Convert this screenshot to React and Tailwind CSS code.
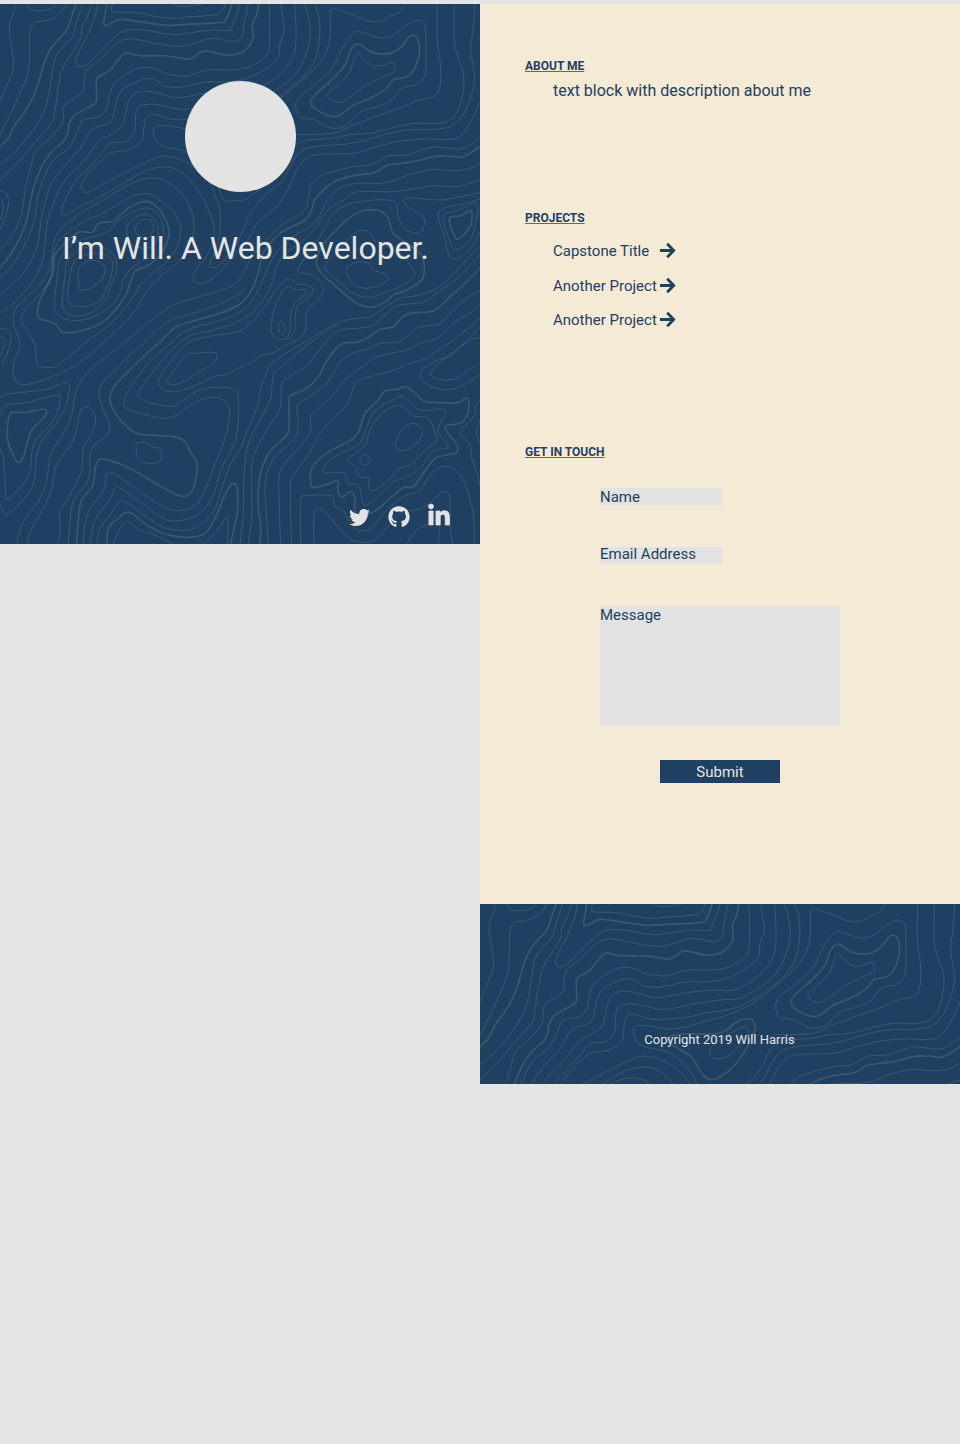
import React from "react";
import { FaTwitter, FaGithub, FaLinkedinIn } from "react-icons/fa";

// Contour lines as point lists. Prefix "b" = bold line, "z" = closed loop.
const TOP = [
  "46,12 40,40 30,65 28,95 34,140 40,180 38,215 25,245 0,303",
  "0,405 30,345 60,280 82,225 88,180 88,120 92,85 105,68 130,63 160,55 185,35 200,12",
  "82,12 84,22 95,30 115,32 140,30 158,24 168,12",
  "b 228,12 215,50 200,90 175,118 150,150 132,190 118,240 100,290 75,335 45,375 25,415 0,440",
  "248,12 230,65 217,110 190,140 165,175 155,230 145,290 125,350 85,410 40,460 0,495",
  "275,12 262,50 245,85 243,110 225,145 190,200 175,260 165,330 155,370 110,420 60,480 0,540",
  "292,12 285,50 265,100 240,150 227,180 228,195 240,200 262,192 300,155 340,115 375,92 430,90 500,102 540,103 600,94 640,90 690,91 697,75 715,30 718,12",
  "71,600 82,540 95,490 110,450 150,415 180,380 190,355 190,325 205,305 245,280 252,262 254,225 270,200 300,180 340,138 375,118 420,120 480,133 540,139 590,128 640,115 690,124 715,120 728,105 732,70 745,12",
  "b 92,600 105,550 130,490 160,450 190,425 203,400 208,370 225,345 260,325 285,310 290,295 289,240 300,228 330,210 360,173 380,159 420,167 500,168 560,177 580,172 610,153 640,157 680,165 720,160 750,135 760,108 757,75 770,45 776,12",
  "b 320,12 316,40 311,70 318,77 330,72 360,58 420,65 500,76 560,73 660,68 680,55 696,12",
  "338,12 334,30 345,36 410,38 470,50 520,55 560,51 640,45 665,35 676,12",
  "515,12 540,20 570,18 605,12",
  "112,600 118,570 140,515 165,475 205,445 230,400 245,365 270,355 300,350 320,325 328,290 340,255 375,225 410,207 440,202 475,210 500,222 560,228 600,215 640,209 700,210 750,200 790,175 808,140 807,12",
  "137,600 150,560 175,520 205,485 240,445 275,390 325,370 340,350 348,310 365,270 400,250 440,236 470,242 490,258 530,262 560,258 620,246 680,246 740,235 800,205 835,170 840,130 853,90 848,50 842,12",
  "165,600 180,565 205,530 250,485 295,425 330,405 365,380 375,350 385,305 405,280 435,273 475,280 520,292 560,290 620,278 700,270 760,270 820,240 865,195 885,150 888,90 884,12",
  "195,600 225,545 260,510 300,465 330,430 370,427 390,415 405,390 407,345 415,322 440,313 480,315 540,328 580,325 650,310 720,300 780,295 835,265 885,225 915,170 930,110 925,50 912,12",
  "945,12 958,60 958,120 945,180 915,225 870,265 800,310 740,330 680,338 620,352 560,357 510,357 480,347 455,342 440,350 432,380 427,420 410,437 380,452 335,458 300,485 265,520 246,548 245,565 258,577 275,572 345,532 420,495 470,472 500,469 545,480 590,508 630,552 650,600",
  "280,600 320,580 370,550 430,515 480,502 520,505 560,530 590,565 612,600",
  "310,600 375,560 430,537 465,535 500,545 535,570 560,600",
  "375,600 400,588 440,581 470,590 478,600",
  "1215,12 1200,35 1170,48 1145,62 1110,64 1060,45 1015,30 997,27 991,45 990,110 975,165 940,210 890,255 840,295 800,320 740,347 690,360 620,380 570,387 520,380 480,376 461,385 462,405 475,430 500,442 560,455 600,480 640,530 670,600",
  "bz 600,448 568,428 572,408 620,402 690,402 730,395 765,370 795,356 818,362 825,385 812,420 790,460 760,500 725,528 695,539 672,528 655,505 635,472",
  "z 690,460 697,437 750,400 790,382 806,388 800,410 775,440 745,468 710,477 695,472",
  "z 890,335 888,310 905,285 950,250 1000,200 1030,140 1060,100 1075,94 1110,105 1145,114 1180,105 1220,75 1250,61 1268,65 1277,90 1278,200 1270,235 1250,253 1210,262 1195,275 1175,300 1140,318 1090,332 1065,350 1040,375 1005,385 970,375 945,360 900,352",
  "bz 932,305 945,285 1000,235 1035,195 1050,155 1065,135 1080,134 1120,158 1170,160 1205,140 1225,112 1238,105 1252,115 1259,150 1250,190 1235,220 1215,232 1180,240 1160,265 1110,295 1060,315 1035,335 1010,349 980,345 940,322",
  "z 982,288 990,275 1030,240 1050,215 1065,170 1075,160 1090,178 1120,198 1150,195 1175,187 1185,200 1180,217 1150,230 1090,260 1050,292 1020,307 1000,303",
  "1312,12 1312,120 1320,180 1322,240 1312,280 1290,293 1255,300 1210,320 1120,352 1060,375 1010,397 960,403 880,404",
  "1363,12 1362,120 1375,175 1390,220 1390,270 1375,330 1350,360 1310,370 1240,370 1170,385 1110,400 1050,404 1000,414 930,420 895,430 870,450 840,510 790,560 735,600",
  "1424,12 1420,80 1412,150 1420,200 1424,240 1410,300 1385,350 1350,380 1300,388 1220,390 1160,402 1100,420 1040,432 970,437 925,445 895,460 870,500 840,550 800,580 782,600",
  "1440,305 1415,360 1385,405 1350,418 1270,417 1190,425 1130,440 1060,460 960,463 920,475 893,505 870,555 845,600",
  "1440,410 1410,435 1380,447 1330,443 1300,441 1260,452 1220,465 1170,467 1145,478 1110,495 1060,500 1000,515 960,530 935,550 928,575 925,600",
  "b 1440,440 1410,460 1380,472 1345,468 1300,470 1240,485 1165,495 1140,510 1115,520 1060,527 1010,542 970,570 942,600",
  "1440,490 1400,508 1350,512 1300,508 1240,520 1180,542 1140,550 1070,550 1020,563 980,600",
  "1440,540 1400,552 1370,560 1300,558 1240,566 1180,575 1080,575 1050,585 1030,600",
  "0,573 20,580 25,600",
];

const MIDDLE = [
  "25,30 24,50 15,85 0,120",
  "0,25 9,40 8,65 0,90",
  "71,30 62,80 40,130 0,180",
  "b 92,30 85,70 70,120 40,180 0,235",
  "112,30 105,80 90,130 60,190 30,235 0,262",
  "137,30 125,80 118,130 108,180 70,250 30,290 0,315",
  "165,30 143,90 135,160 128,210 105,265 60,320 30,350 0,368",
  "195,30 184,60 190,73 205,70 240,50 280,30",
  "310,30 250,65 195,105 165,145 155,200 148,240 115,290 75,325 45,360 40,400 55,440 60,470 45,505 40,525",
  "478,30 520,65 540,105 538,150 510,205 430,275 390,335 330,402 260,455 200,505 175,525",
  "375,30 340,50 300,75 260,90 200,130 175,155 160,195 153,260 130,300 72,365 65,395 85,430 105,465 108,500 112,525",
  "bz 440,34 400,45 360,75 340,94 300,98 285,115 275,128 240,125 210,145 180,175 163,200 160,245 145,280 120,330 112,365 118,385 150,395 170,405 185,425 210,428 260,418 310,395 350,355 380,310 395,265 405,245 450,222 480,195 500,160 507,125 495,85 470,50",
  "z 430,55 460,60 485,90 490,130 480,170 450,200 400,230 370,270 360,310 330,350 280,380 230,392 190,385 165,365 163,340 170,280 175,230 190,190 220,160 260,145 300,135 330,120 350,95 380,75",
  "z 310,173 345,200 350,240 335,280 315,330 270,370 220,377 190,355 188,310 195,260 200,220 225,185 270,170",
  "z 300,190 335,210 335,250 320,290 300,330 260,349 220,347 203,325 208,270 220,220 250,195",
  "z 275,211 305,220 315,245 300,275 270,295 242,300 235,280 235,240 250,220",
  "z 435,88 455,95 460,120 445,142 425,140 406,125 412,100",
  "z 430,73 460,85 475,120 465,160 440,175 400,165 380,125 390,95",
  "560,30 577,70 582,110 575,150 545,205 470,270 430,320 400,370 340,430 280,485 230,525",
  "845,30 815,65 775,95 750,140 730,165 690,210 650,255 615,278 590,280 580,268 588,240 625,190 642,140 637,90 612,30",
  "782,30 745,80 725,130 700,180 665,220 640,233 628,225 640,195 658,140 660,60 650,30",
  "670,30 690,34 705,32 735,30",
  "925,30 918,55 890,80 845,105 800,150 770,180 745,220 730,250 700,285 650,305 580,325 520,345 460,385 400,435 340,485 285,525",
  "735,300 700,322 640,350 570,373 520,387 480,412 430,460 390,495 360,525",
  "b 942,30 935,60 915,90 880,108 840,130 810,160 785,200 775,250 755,300 720,342 660,370 590,390 530,410 490,445 450,482 405,525",
  "980,30 960,75 935,105 880,140 835,180 805,230 780,290 750,340 715,370 650,395 590,410 545,430 510,462 470,495 440,525",
  "1030,30 990,55 960,90 945,115 900,160 855,190 830,230 815,280 775,350 715,395 640,420 570,437 535,460 505,490 475,525",
  "505,525 540,480 575,452 650,435 720,423 765,385 805,335 835,290 865,268 895,283 925,285 938,300 925,322 895,345 885,380 885,420 870,443 845,448 823,440 813,415 817,380 830,340 850,300 865,290 885,298 915,300 920,308 890,335 873,365 870,420 862,442",
  "535,525 555,500 575,491 640,487 650,498 648,510 635,525",
  "735,525 755,519 780,497 820,488 860,465 900,445 918,415 918,375 935,345 965,315 968,290 945,258 910,250 892,243 900,225 930,180 960,140 982,100 1000,70 1040,45 1100,32 1160,30 1187,40 1195,80 1212,112 1250,131 1270,115 1272,85 1250,68 1220,48 1210,32 1230,24 1320,30 1380,20 1440,8",
  "z 838,398 848,398 857,412 853,428 842,430 837,415",
  "bz 1120,59 1145,65 1165,85 1180,130 1220,160 1260,190 1273,230 1265,270 1220,300 1180,315 1150,340 1110,352 1070,340 1020,300 970,255 950,225 955,190 980,150 1010,120 1040,90 1080,65",
  "z 1085,120 1110,130 1130,155 1200,190 1240,240 1240,262 1200,290 1160,305 1110,322 1060,310 1010,270 978,240 982,215 1020,180 1050,140",
  "z 1070,217 1105,220 1122,240 1160,255 1165,268 1140,285 1100,295 1065,285 1042,255 1042,232",
  "1440,26 1400,40 1340,52 1318,65 1315,85 1330,130 1345,190 1360,206 1385,200 1420,165 1440,125",
  "z 1332,75 1370,62 1410,45 1430,38 1434,60 1425,110 1410,150 1370,180 1355,165 1335,110",
  "bz 1352,80 1380,78 1410,62 1416,75 1410,110 1385,140 1370,146 1358,125 1348,95",
  "1440,165 1400,210 1360,250 1320,290 1260,315 1200,325 1150,355 1110,380 1060,387 1010,400 940,440 870,482 810,525",
  "1010,404 960,437 905,478 850,525",
  "1440,195 1370,265 1310,310 1265,338 1200,345 1160,370 1120,405 1070,415 1020,420 985,447 950,490 925,525",
  "b 1440,235 1400,275 1340,330 1300,363 1240,368 1210,378 1180,410 1140,418 1100,445 1070,457 1030,460 1000,485 973,525",
  "1440,300 1400,325 1360,360 1320,400 1280,408 1250,415 1220,440 1190,457 1140,460 1110,475 1060,490 1030,507 1015,525",
  "1440,340 1410,370 1360,400 1320,440 1260,460 1220,480 1170,490 1120,505 1095,525",
  "1440,385 1360,450 1300,490 1280,505 1220,525",
  "1440,410 1360,490 1310,512 1285,525",
  "1440,445 1410,450 1350,495 1310,525",
  "0,415 20,418 33,440 25,480 0,535",
  "0,440 12,445 15,460 0,500",
];

const BOTTOM = [
  "40,0 40,30 55,55 80,58 130,45 180,25 230,0",
  "112,0 130,7 160,7 175,0",
  "0,98 20,87 70,82 140,72 195,53 208,60 205,90 195,130 165,180 130,220 110,270 105,330 95,370 60,415 25,447 10,440 0,415",
  "0,150 10,130 30,117 80,113 130,100 175,90 182,98 172,140 150,180 110,220 95,260 92,310 75,350 45,385 25,402 17,395 15,340 10,280 0,250",
  "bz 30,147 45,142 80,142 130,132 140,145 125,165 95,195 85,225 70,275 55,293 45,280 25,235 22,190",
  "285,0 245,45 225,90 215,150 190,205 155,260 145,310 140,350 115,410 70,470 50,537",
  "82,537 95,490 130,430 155,370 170,300 215,235 230,190 240,140 255,125 275,135 287,165 275,205 250,250 247,310 230,350 205,400 180,440 180,500 172,537",
  "360,0 310,50 298,85 308,130 328,180 320,210 285,240 270,270 270,310 262,350 225,400 213,440 205,537",
  "b 405,0 350,55 330,95 338,130 370,175 410,205 450,210 520,215 555,230 570,260 590,290 590,330 575,380 555,394 520,385 450,345 380,305 320,284 295,285 285,315 277,365 245,405 235,460 230,537",
  "440,0 395,60 373,105 380,130 430,147 490,160 530,150 580,115 620,100 655,98 685,120 688,160 672,230 640,310 610,385 580,425 530,437 480,420 400,365 340,325 318,328 312,375 270,430 255,480 250,537",
  "475,0 430,60 413,90 440,110 490,122 520,123 550,105 600,75 650,67 695,70 713,90 715,160 705,230 665,310 640,390 600,445 540,467 490,460 420,410 360,370 345,373 325,410 285,465 270,537",
  "290,537 300,490 330,450 355,412 375,410 420,440 480,482 540,497 590,485 640,440 665,370 690,300 720,255 740,200 770,130 785,60 810,0",
  "b 320,537 325,490 355,460 380,442 400,448 440,480 500,508 560,517 610,508 640,470 670,400 690,362 705,357 712,375 712,440 700,500 692,537",
  "340,537 360,490 380,471 400,480 420,497 460,508 520,537",
  "610,537 650,500 680,455 684,480 683,537",
  "z 408,245 415,233 435,234 460,247 480,250 485,265 478,290 445,295 415,280",
  "505,0 475,45 480,65 500,77 540,77 590,60 640,35 680,28 710,12 735,0",
  "535,0 505,40 505,55 530,58 560,45 590,25 635,0",
  "850,0 820,30 812,100 780,165 745,235 732,330 730,450 720,537",
  "925,0 870,35 845,60 840,130 810,180 770,250 755,310 755,450 745,537",
  "b 973,0 955,35 920,70 875,90 867,110 867,195 850,220 810,260 785,310 775,370 775,430 782,480 780,537",
  "1015,0 980,55 930,95 892,120 895,170 885,220 840,260 805,310 795,370 800,450 805,537",
  "1095,0 1040,40 990,100 935,150 932,190 920,220 860,290 838,330 838,430 842,537",
  "1220,0 1160,22 1080,45 1060,70 1040,120 1000,160 960,205 930,260 880,330 872,360 872,450 875,537",
  "bz 1215,65 1240,80 1270,107 1320,113 1375,113 1398,98 1407,115 1402,150 1380,175 1345,180 1337,195 1370,240 1370,262 1340,270 1305,280 1270,325 1240,365 1210,368 1170,400 1130,435 1095,450 1066,440 1064,395 1050,380 1030,395 1015,385 1013,348 990,355 940,368 932,350 935,310 980,265 1060,220 1080,190 1095,145 1130,110 1155,78 1190,73",
  "z 1205,94 1220,103 1260,135 1320,132 1337,145 1320,175 1315,205 1342,235 1340,250 1300,260 1260,310 1210,340 1180,350 1150,380 1100,420 1088,410 1075,360 1045,357 1035,325 1005,322 970,322 975,300 1020,265 1075,240 1100,190 1115,150 1150,120",
  "z 1195,122 1215,130 1240,152 1285,160 1300,190 1310,230 1290,243 1265,265 1230,300 1200,310 1160,350 1120,377 1107,370 1105,340 1080,335 1065,305 1043,285 1060,270 1095,240 1110,195 1140,150 1170,130",
  "z 1235,175 1260,185 1267,210 1240,245 1210,257 1188,250 1188,230 1205,195",
  "z 1096,271 1112,284 1104,297 1088,299 1080,286 1084,275",
  "902,537 902,410 915,392 990,391 1000,400 1005,425 1030,435 1045,465 1065,490 1085,497 1115,490 1150,445 1210,395 1260,375 1290,330 1320,308 1350,305 1380,330 1400,370 1420,450 1423,537",
  "942,537 942,450 955,432 980,445 1010,480 1040,515 1070,530 1115,530 1150,500 1200,445 1250,435 1290,415 1320,385 1337,380 1350,400 1350,480 1358,537",
  "1220,537 1250,495 1290,475 1310,465 1317,480 1315,537",
  "1440,30 1380,65 1330,74 1285,60 1260,35 1270,10 1285,0",
  "1310,0 1295,22 1300,38 1340,45 1380,35 1425,0",
  "1440,105 1425,125 1425,150 1390,190 1382,210 1410,240 1415,280 1430,320 1440,360",
  "1440,165 1430,200 1435,225 1440,235",
];

// Catmull-Rom spline through the points, written as cubic Béziers.
function spline(points, closed) {
  const n = points.length;
  const at = (i) =>
    closed ? points[(i + n) % n] : points[Math.max(0, Math.min(n - 1, i))];
  let d = `M${points[0][0]} ${points[0][1]}`;
  for (let i = 0; i < (closed ? n : n - 1); i++) {
    const [a, b, c, e] = [at(i - 1), at(i), at(i + 1), at(i + 2)];
    d += `C${b[0] + (c[0] - a[0]) / 6} ${b[1] + (c[1] - a[1]) / 6} ${
      c[0] - (e[0] - b[0]) / 6
    } ${c[1] - (e[1] - b[1]) / 6} ${c[0]} ${c[1]}`;
  }
  return closed ? d + "Z" : d;
}

function Contours({ lines }) {
  return lines.map((line, i) => {
    const parts = line.split(" ");
    const flags = /^[bz]/.test(parts[0]) ? parts.shift() : "";
    const points = parts.map((p) => p.split(",").map(Number));
    return (
      <path
        key={i}
        d={spline(points, flags.includes("z"))}
        strokeWidth={flags.includes("b") ? 5 : 3}
      />
    );
  });
}

function Topography({ height, full }) {
  return (
    <svg
      className="absolute inset-0"
      width="480"
      height={height}
      viewBox={`0 12 1440 ${height * 3}`}
      fill="none"
      stroke="#f4ead6"
      strokeOpacity="0.14"
      aria-hidden="true"
    >
      <Contours lines={TOP} />
      {full && (
        <>
          <svg y="570" width="1440" height="525" overflow="hidden">
            <Contours lines={MIDDLE} />
          </svg>
          <svg y="1095" width="1440" height="537" overflow="hidden">
            <Contours lines={BOTTOM} />
          </svg>
        </>
      )}
    </svg>
  );
}

function Arrow() {
  return (
    <svg
      className="-translate-y-[0.5px]"
      width="16"
      height="16"
      viewBox="0 0 16 16"
      fill="none"
      stroke="#1f4060"
      strokeWidth="2.8"
    >
      <path d="M0 8H13.6M7.2 1.3L13.7 8L7.2 14.7" />
    </svg>
  );
}

function Heading({ children }) {
  return (
    <h2 className="text-[12px] leading-[14px] font-bold underline decoration-[#1f4060]/75 decoration-1 underline-offset-1">
      {children}
    </h2>
  );
}

function Project({ title }) {
  return (
    <li className="flex h-[18px] items-center">
      <span className="w-[107px] whitespace-nowrap">{title}</span>
      <Arrow />
    </li>
  );
}

export default function App() {
  return (
    <div className="flex min-h-[1444px] w-[960px] items-start bg-[#e4e4e4] pt-1 font-['Roboto',sans-serif] text-[#1f4060]">
      <section className="relative h-[540px] w-[480px] shrink-0 overflow-hidden bg-[#1f4060] text-[#e4e4e4]">
        <Topography height={540} full />
        <div className="relative flex h-full flex-col items-center pt-[77px]">
          <div className="size-[111px] rounded-full bg-[#e3e3e3]" />
          <h1 className="mt-[37px] ml-[11px] text-[32px] leading-[38px] whitespace-nowrap">
            I’m Will. A Web Developer.
          </h1>
          <div className="mt-auto mr-[29px] mb-4 flex items-center self-end text-[#e3e3e3]">
            <FaTwitter className="mt-[3px] size-[21px]" />
            <FaGithub className="mt-[2px] ml-[18px] size-[22px]" />
            <FaLinkedinIn className="ml-[17px] size-[24px] overflow-visible stroke-current stroke-[14]" />
          </div>
        </div>
      </section>

      <main className="flex w-[480px] shrink-0 flex-col">
        <div className="h-[900px] bg-[#f4ead6] pt-[55px] pl-[45px]">
          <section className="h-[152px]">
            <Heading>ABOUT ME</Heading>
            <p className="mt-2 ml-7 text-[16px] leading-[19px]">
              text block with description about me
            </p>
          </section>
          <section className="h-[234px]">
            <Heading>PROJECTS</Heading>
            <ul className="mt-[17px] ml-7 flex flex-col gap-[16.5px] text-[15px] leading-[18px]">
              <Project title="Capstone Title" />
              <Project title="Another Project" />
              <Project title="Another Project" />
            </ul>
          </section>
          <section>
            <Heading>GET IN TOUCH</Heading>
            <form className="mt-[29px] ml-[75px] flex w-[240px] flex-col text-[15px] leading-[18px]">
              <div className="h-[17px] w-[122px] bg-[#e2e2e2]">Name</div>
              <div className="mt-[42px] h-[17px] w-[122px] bg-[#e2e2e2] leading-[14px]">
                Email Address
              </div>
              <div className="mt-[42px] h-[120px] bg-[#e2e2e2]">Message</div>
              <button
                type="button"
                className="mt-[34px] h-[23px] w-[120px] self-center bg-[#1f4060] text-[#e4e4e4]"
              >
                Submit
              </button>
            </form>
          </section>
        </div>
        <footer className="relative h-[180px] overflow-hidden bg-[#1f4060] text-[#e4e4e4]">
          <Topography height={180} />
          <p className="relative pt-[128px] pr-px text-center text-[13px] leading-[15px]">
            Copyright 2019 Will Harris
          </p>
        </footer>
      </main>
    </div>
  );
}
